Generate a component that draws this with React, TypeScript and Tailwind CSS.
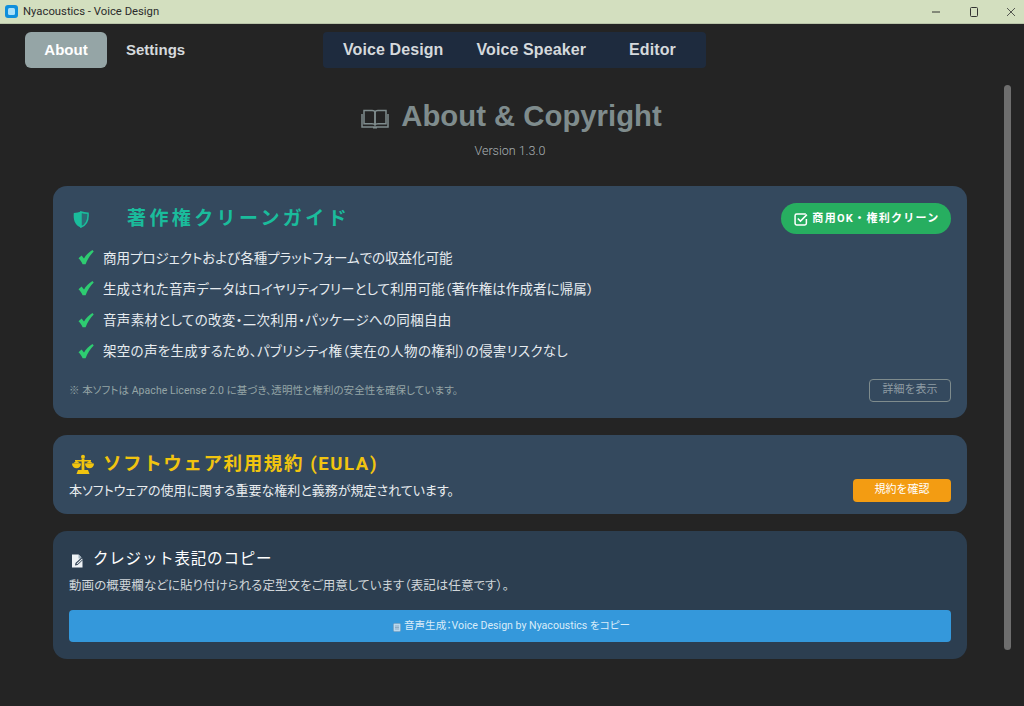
import React from "react";

const cjk = "font-['Roboto','Noto_Sans_CJK_JP',sans-serif]";
const palt = "[font-feature-settings:'palt']";

function Check() {
  return (
    <svg width="16" height="15" viewBox="0 0 16 15" className="shrink-0">
      <path d="M0.500 8.200 L3.600 5.600 L6 8.400 C8 5 11 2 14.500 0 L15.700 1.500 C12.200 5 9.600 9 7.600 14.300 L4.600 14.300 C3.600 11.800 2.200 9.800 0.500 8.200 Z" fill="#2ecc71" />
    </svg>
  );
}

function Feature({ text, track }: { text: string; track: string }) {
  return (
    <div className="flex h-[31.3px] items-center gap-[9px] pl-[9px]">
      <Check />
      <span className={`text-[13.500px] text-[#e6ebef] ${palt} ${track}`}>{text}</span>
    </div>
  );
}

export default function App() {
  return (
    <div className={`flex h-[706px] w-[1024px] flex-col overflow-hidden bg-[#242424] ${cjk}`}>
      <div className="flex h-6 shrink-0 items-center justify-between border-b border-[#b9c4a8] bg-[#d3dfbf] pl-[5px] pr-[8px]">
        <div className="flex items-center gap-[5px]">
          <svg width="13" height="13" viewBox="0 0 13 13">
            <rect width="13" height="13" rx="3" fill="#0f8fdc" />
            <rect x="3" y="3" width="7" height="7" rx="1.500" fill="#a9e0fa" />
          </svg>
          <span className="mt-[2px] font-['Roboto',sans-serif] text-[11.300px] text-[#2b2b2b]">Nyacoustics - Voice Design</span>
        </div>
        <div className="flex items-center gap-[27.500px] text-[#333]">
          <svg width="10" height="10" viewBox="0 0 10 10"><path d="M1 5h8" stroke="currentColor" /></svg>
          <svg width="10" height="10" viewBox="0 0 10 10"><rect x="1.500" y="0.500" width="7" height="9" rx="1" fill="none" stroke="currentColor" /></svg>
          <svg width="10" height="10" viewBox="0 0 10 10"><path d="M1 1l8 8M9 1l-8 8" stroke="currentColor" strokeWidth="0.800" /></svg>
        </div>
      </div>

      <div className="flex h-[44px] shrink-0 items-start pt-2 font-['Liberation_Sans',sans-serif] font-bold">
        <div className="ml-[25px] flex h-9 w-[82px] items-center justify-center rounded-md bg-[#95a5a6] text-[15px] text-white">About</div>
        <div className="ml-[19px] w-[197px] text-[15px] leading-9 text-[#d5d9dc]">Settings</div>
        <div className="flex h-9 w-[383px] items-center rounded-sm bg-[#1e2b3e] text-[16px] tracking-[0.100px] text-[#d5d9dc]">
          <span className="ml-5">Voice Design</span>
          <span className="ml-[33px]">Voice Speaker</span>
          <span className="ml-[43px]">Editor</span>
        </div>
      </div>

      <div className="flex min-h-0 flex-1">
        <main className="w-[1004px] shrink-0 pl-[53px] pr-[37px] pt-[29px]">
          <div className="ml-[5px] flex h-[38px] items-center justify-center gap-[12px] pr-[2px] font-['Liberation_Sans',sans-serif]">
            <svg width="28" height="22" viewBox="0 0 28 22" fill="none" stroke="#7f8c8d" strokeWidth="1.500" className="mt-[6px]">
              <path d="M3 2.500h8c1.600 0 3 .8 3 2v13c0-1-1.400-1.800-3-1.800H3z" />
              <path d="M25 2.500h-8c-1.600 0-3 .8-3 2v13c0-1 1.400-1.800 3-1.800h8z" />
              <path d="M1 6v13h26V6M12 19.800h4" />
            </svg>
            <h1 className="text-[29.300px] font-bold text-[#7f8c8d]">About &amp; Copyright</h1>
          </div>
          <p className="mt-[7px] text-center text-[12.500px] font-light leading-[18px] text-[#aab2b5]">Version 1.3.0</p>

          <section className="mt-[26px] h-[232px] rounded-[14px] bg-[#34495e] px-4 pt-[17px]">
            <div className="flex h-[31px] items-center justify-between">
              <div className="flex items-center">
                <svg width="16" height="17" viewBox="0 0 16 17" className="ml-[4px] mt-[2px]">
                  <path d="M8 1C10 1.800 12.500 2.200 15 2.300 15.500 8 14.500 13.500 8 16Z" fill="#2c6a74" stroke="#1abc9c" strokeWidth="1.500" />
                  <path d="M8 .4C6 1.300 3.500 1.800 .8 1.900 .2 8 1.500 14 8 16.600Z" fill="#1abc9c" />
                </svg>
                <h2 className="ml-[38px] mt-[1px] text-[19px] font-bold tracking-[3.400px] text-[#1abc9c]">著作権クリーンガイド</h2>
              </div>
              <div className="flex h-[31px] w-[170px] items-center justify-center gap-[4px] rounded-full bg-[#27ae60] pl-[2px] pt-[1px] text-[11px] font-bold tracking-[1.300px] text-white">
                <svg width="14" height="13" viewBox="0 0 13 12" fill="none" stroke="white" strokeWidth="1.400">
                  <path d="M11.500 5.500v4a1.500 1.500 0 0 1-1.500 1.500H2.500A1.500 1.500 0 0 1 1 9.500V2.500A1.500 1.500 0 0 1 2.500 1H11" />
                  <path d="M3.500 5l2.500 2.500 6-6" />
                </svg>
                商用OK・権利クリーン
              </div>
            </div>
            <div className="mt-[8px]">
              <Feature text="商用プロジェクトおよび各種プラットフォームでの収益化可能" track="tracking-[0px]" />
              <Feature text="生成された音声データはロイヤリティフリーとして利用可能（著作権は作成者に帰属）" track="tracking-[0.100px]" />
              <Feature text="音声素材としての改変・二次利用・パッケージへの同梱自由" track="tracking-[0.330px]" />
              <Feature text="架空の声を生成するため、パブリシティ権（実在の人物の権利）の侵害リスクなし" track="tracking-[0.290px]" />
            </div>
            <div className="mt-[12px] flex items-center justify-between">
              <span className={`text-[10.500px] tracking-[0.060px] text-[#95a5a6] ${palt}`}>※ 本ソフトは Apache License 2.0 に基づき、透明性と権利の安全性を確保しています。</span>
              <div className="flex h-[23px] w-[82px] items-center justify-center rounded-[4px] border border-[#7f8c8d] text-[11px] text-[#8e9ba3]">詳細を表示</div>
            </div>
          </section>

          <section className="mt-[17px] h-[79px] rounded-[14px] bg-[#34495e] px-4 pt-[16px]">
            <div className="flex items-center gap-[9px]">
              <svg width="22" height="21" viewBox="0 0 22 20" fill="#f1c40f" className="ml-[3px]">
                <circle cx="11" cy="2.300" r="2" />
                <path d="M3 5.500h16V7H3z" />
                <path d="M9.600 4h2.800v12.500H9.600z" />
                <path d="M0 9h9c0 3-2 4.800-4.500 4.800S0 12 0 9z" />
                <path d="M13 9h9c0 3-2 4.800-4.500 4.800S13 12 13 9z" />
                <path d="M3.500 7l1-1 1 1 2.500 2H1z" />
                <path d="M16.500 7l1-1 1 1 2.500 2h-7z" />
                <path d="M6 15.500h10l1.500 4h-13z" />
              </svg>
              <h2 className="text-[18.500px] font-bold leading-[26px] tracking-[1.600px] text-[#f1c40f]">ソフトウェア利用規約 (EULA)</h2>
            </div>
            <div className="mt-[2px] flex items-center justify-between">
              <p className={`text-[13px] leading-[19px] text-[#e8ecef] ${palt}`}>本ソフトウェアの使用に関する重要な権利と義務が規定されています。</p>
              <div className="flex h-[23px] w-[98px] items-center justify-center rounded-[4px] bg-[#f39c12] text-[11px] text-white">規約を確認</div>
            </div>
          </section>

          <section className="mt-[17px] h-[128px] rounded-[14px] bg-[#2c3e50] px-4 pt-[16px]">
            <div className="flex items-center gap-[7px]">
              <svg width="16" height="16" viewBox="0 0 16 16" className="mt-[4px] ml-[1px]">
                <path d="M2 1.500h6.500l4 4v9H2z" fill="#eef2f5" />
                <path d="M8.500 1.500v4h4" fill="#9fb0bd" />
                <path d="M5 12.500l.5-2.500 6.500-6 2 2-6.500 6z" fill="#2c3e50" />
                <path d="M6.500 11.200l.3-1 5.200-4.700.7.700-5.200 4.700z" fill="#eef2f5" />
              </svg>
              <h3 className="text-[15.500px] leading-[24px] tracking-[0.800px] text-white">クレジット表記のコピー</h3>
            </div>
            <p className={`mt-[6px] text-[12.500px] leading-[18px] tracking-[0.050px] text-[#d0d6da] ${palt}`}>動画の概要欄などに貼り付けられる定型文をご用意しています（表記は任意です）。</p>
            <div className={`mt-[15px] flex h-8 items-center justify-center gap-[3px] rounded-[4px] bg-[#3498db] pl-[3px] text-[10.600px] text-[#d9ecf9] ${palt}`}>
              <svg width="8" height="9" viewBox="0 0 8 9" className="mt-[2px]">
                <rect x="0.500" y="0.500" width="7" height="8" rx="1" fill="#b9d8ee" stroke="#7f9fb8" strokeWidth="0.600" />
                <path d="M2 3h4M2 4.500h4M2 6h4" stroke="#6f8fa8" strokeWidth="0.600" />
              </svg>
              音声生成：Voice Design by Nyacoustics をコピー
            </div>
          </section>
        </main>
        <div className="flex-1 pt-[17px]">
          <div className="h-[565px] w-[7px] rounded-full bg-[#6e6e6e]" />
        </div>
      </div>
    </div>
  );
}
